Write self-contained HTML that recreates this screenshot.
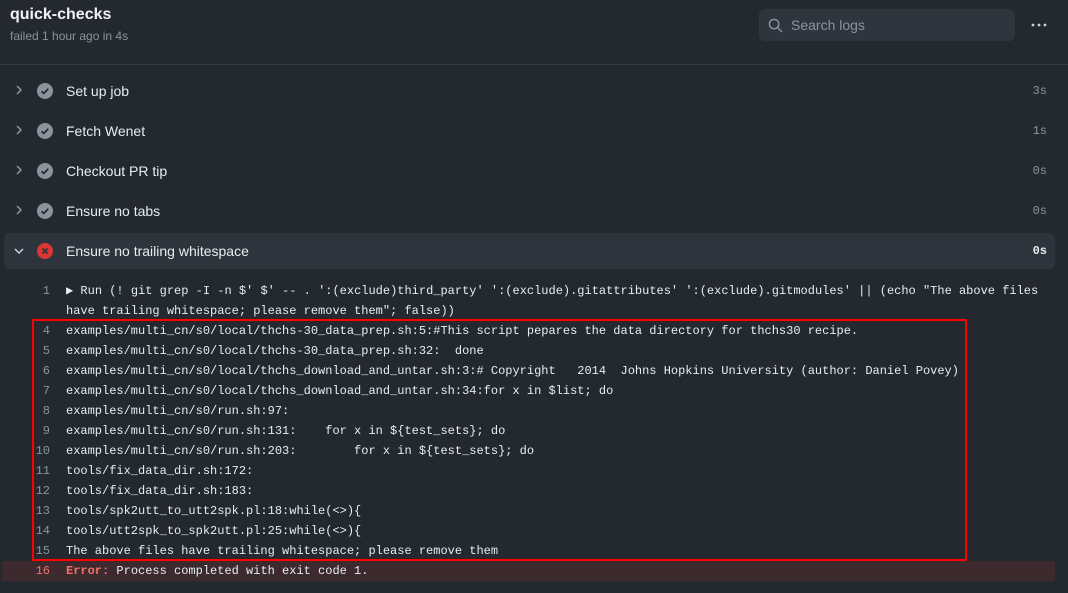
<!DOCTYPE html>
<html><head><meta charset="utf-8"><style>
*{margin:0;padding:0;box-sizing:border-box}
body{width:1068px;height:593px;background:#24292f;color:#e6edf3;font-family:"Liberation Sans",sans-serif;position:relative;overflow:hidden}
.abs{position:absolute}
h1{position:absolute;left:10px;top:6px;font-size:16px;font-weight:bold;color:#f0f3f6}
.sub{left:10px;top:29px;font-size:12px;color:#8b949e}
.search{left:759px;top:9px;width:256px;height:32px;background:#2f353d;border-radius:6px}
.search span{position:absolute;left:32px;top:8px;font-size:14px;color:#8b949e}
.hr{left:0;top:64px;width:1068px;height:1px;background:#353b42}
.step{position:absolute;left:4px;width:1051px;height:36px}
.step .t{position:absolute;left:62px;top:10px;font-size:14px;color:#e6edf3}
.step .d{position:absolute;right:8px;top:11px;font:12px "Liberation Mono",monospace;color:#8b949e}
.step .chev{position:absolute;left:10px;top:11px}
.step .ic{position:absolute;left:33px;top:10px;width:16px;height:16px;border-radius:50%;background:#8b949e}
.exp{background:#2e343c;border-radius:6px}
.n{position:absolute;left:0;width:50px;text-align:right;color:#8b949e;font:12px/20px "Liberation Mono",monospace}
.c{position:absolute;left:66px;color:#e6edf3;font:12px/20px "Liberation Mono",monospace;white-space:pre}
</style></head><body>
<h1>quick-checks</h1>
<div class="abs sub">failed 1 hour ago in 4s</div>
<div class="abs search"><svg class="abs" style="left:9px;top:9px" width="15" height="15" viewBox="0 0 16 16"><circle cx="6.5" cy="6.5" r="5" fill="none" stroke="#8b949e" stroke-width="1.5"/><path d="M10.2 10.2L14.5 14.5" stroke="#8b949e" stroke-width="1.5" stroke-linecap="round"/></svg><span>Search logs</span></div>
<svg class="abs" style="left:1031px;top:23px" width="16" height="4"><circle cx="2" cy="2" r="1.4" fill="#c9d1d9"/><circle cx="8" cy="2" r="1.4" fill="#c9d1d9"/><circle cx="14" cy="2" r="1.4" fill="#c9d1d9"/></svg>
<div class="abs hr"></div>

<div class="step" style="top:73px"><svg class="chev" width="10" height="12" viewBox="0 0 10 12"><path d="M3 2l4 4-4 4" fill="none" stroke="#8b949e" stroke-width="1.5"/></svg><div class="ic"><svg width="16" height="16"><path d="M4.5 8.2l2.3 2.2 4.5-4.6" fill="none" stroke="#24292f" stroke-width="1.7"/></svg></div><div class="t">Set up job</div><div class="d">3s</div></div>
<div class="step" style="top:113px"><svg class="chev" width="10" height="12" viewBox="0 0 10 12"><path d="M3 2l4 4-4 4" fill="none" stroke="#8b949e" stroke-width="1.5"/></svg><div class="ic"><svg width="16" height="16"><path d="M4.5 8.2l2.3 2.2 4.5-4.6" fill="none" stroke="#24292f" stroke-width="1.7"/></svg></div><div class="t">Fetch Wenet</div><div class="d">1s</div></div>
<div class="step" style="top:153px"><svg class="chev" width="10" height="12" viewBox="0 0 10 12"><path d="M3 2l4 4-4 4" fill="none" stroke="#8b949e" stroke-width="1.5"/></svg><div class="ic"><svg width="16" height="16"><path d="M4.5 8.2l2.3 2.2 4.5-4.6" fill="none" stroke="#24292f" stroke-width="1.7"/></svg></div><div class="t">Checkout PR tip</div><div class="d">0s</div></div>
<div class="step" style="top:193px"><svg class="chev" width="10" height="12" viewBox="0 0 10 12"><path d="M3 2l4 4-4 4" fill="none" stroke="#8b949e" stroke-width="1.5"/></svg><div class="ic"><svg width="16" height="16"><path d="M4.5 8.2l2.3 2.2 4.5-4.6" fill="none" stroke="#24292f" stroke-width="1.7"/></svg></div><div class="t">Ensure no tabs</div><div class="d">0s</div></div>
<div class="step exp" style="top:233px"><svg class="chev" style="left:9px;top:13px" width="12" height="10" viewBox="0 0 12 10"><path d="M2 3l4 4 4-4" fill="none" stroke="#c9d1d9" stroke-width="1.5"/></svg><div class="ic" style="background:#da3633"><svg width="16" height="16"><path d="M5.5 5.5l5 5M10.5 5.5l-5 5" stroke="#2e343c" stroke-width="1.6"/></svg></div><div class="t">Ensure no trailing whitespace</div><div class="d" style="color:#e6edf3;font-weight:bold">0s</div></div>

<div class="n" style="top:281px">1</div><div class="c" style="top:281px">▶ Run (! git grep -I -n $' $' -- . ':(exclude)third_party' ':(exclude).gitattributes' ':(exclude).gitmodules' || (echo "The above files</div>
<div class="c" style="top:301px">have trailing whitespace; please remove them"; false))</div>
<div class="n" style="top:321px">4</div><div class="c" style="top:321px">examples/multi_cn/s0/local/thchs-30_data_prep.sh:5:#This script pepares the data directory for thchs30 recipe.</div>
<div class="n" style="top:341px">5</div><div class="c" style="top:341px">examples/multi_cn/s0/local/thchs-30_data_prep.sh:32:  done</div>
<div class="n" style="top:361px">6</div><div class="c" style="top:361px">examples/multi_cn/s0/local/thchs_download_and_untar.sh:3:# Copyright   2014  Johns Hopkins University (author: Daniel Povey)</div>
<div class="n" style="top:381px">7</div><div class="c" style="top:381px">examples/multi_cn/s0/local/thchs_download_and_untar.sh:34:for x in $list; do</div>
<div class="n" style="top:401px">8</div><div class="c" style="top:401px">examples/multi_cn/s0/run.sh:97:</div>
<div class="n" style="top:421px">9</div><div class="c" style="top:421px">examples/multi_cn/s0/run.sh:131:    for x in ${test_sets}; do</div>
<div class="n" style="top:441px">10</div><div class="c" style="top:441px">examples/multi_cn/s0/run.sh:203:        for x in ${test_sets}; do</div>
<div class="n" style="top:461px">11</div><div class="c" style="top:461px">tools/fix_data_dir.sh:172:</div>
<div class="n" style="top:481px">12</div><div class="c" style="top:481px">tools/fix_data_dir.sh:183:</div>
<div class="n" style="top:501px">13</div><div class="c" style="top:501px">tools/spk2utt_to_utt2spk.pl:18:while(&lt;&gt;){</div>
<div class="n" style="top:521px">14</div><div class="c" style="top:521px">tools/utt2spk_to_spk2utt.pl:25:while(&lt;&gt;){</div>
<div class="n" style="top:541px">15</div><div class="c" style="top:541px">The above files have trailing whitespace; please remove them</div>
<div class="abs" style="left:2px;top:561px;width:1053px;height:20px;background:#3d2a2f"></div>
<div class="n" style="top:561px;color:#f47067">16</div><div class="c" style="top:561px"><b style="color:#f47067">Error:</b> Process completed with exit code 1.</div>
<div class="abs" style="left:32px;top:319px;width:935px;height:242px;border:2px solid #ff0000"></div>
</body></html>
